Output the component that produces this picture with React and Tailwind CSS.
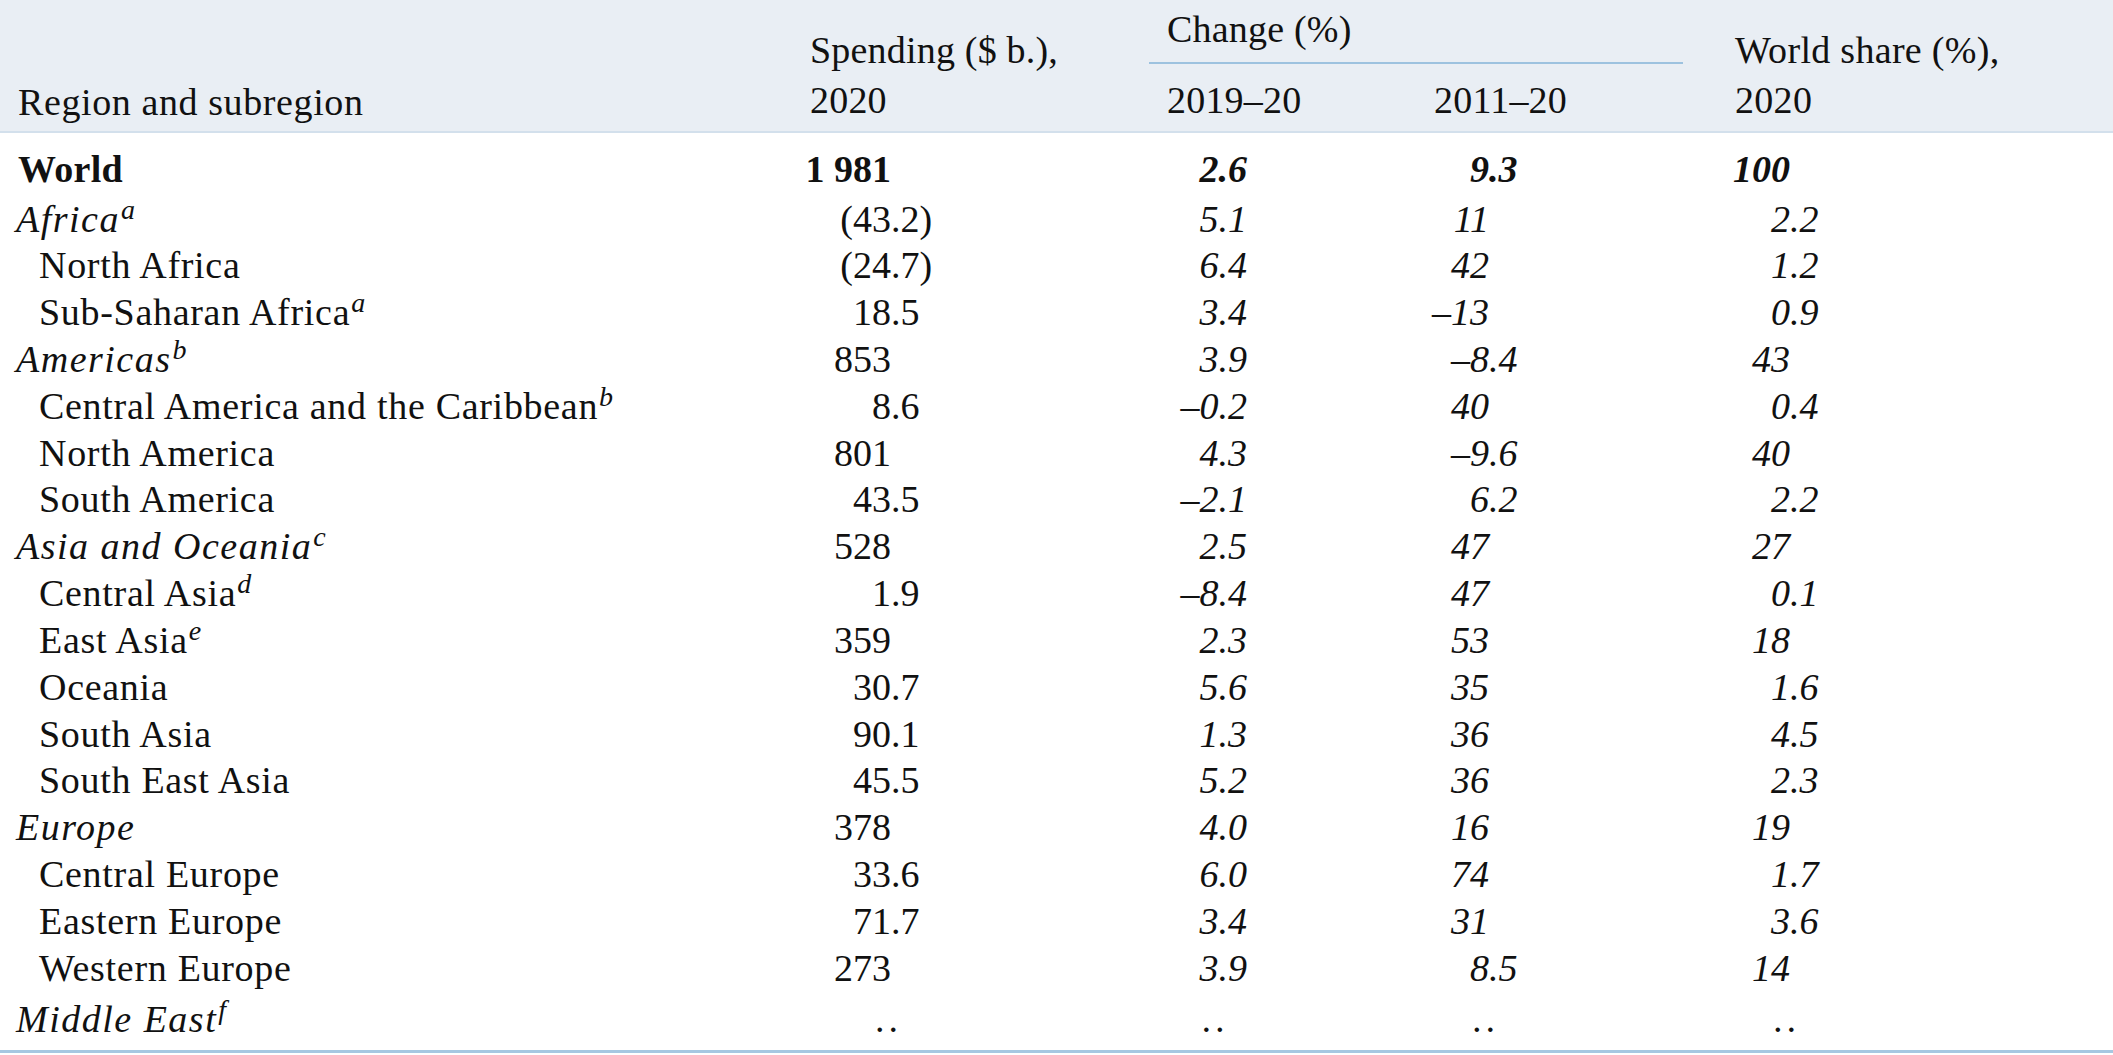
import React from 'react'

const COLS = 'grid grid-cols-[810px_339px_267px_301px_1fr]'

// [label, kind, sup, spending, change 2019-20, change 2011-20, world share]
// numbers are split into [integer part, fraction part] so they line up on the point
const rows = [
  ['World', 'world', '', ['1 981', ''], ['2', '.6'], ['9', '.3'], ['100', '']],
  ['Africa', 'region', 'a', ['(43', '.2)'], ['5', '.1'], ['11', ''], ['2', '.2']],
  ['North Africa', 'sub', '', ['(24', '.7)'], ['6', '.4'], ['42', ''], ['1', '.2']],
  ['Sub-Saharan Africa', 'sub', 'a', ['18', '.5'], ['3', '.4'], ['–13', ''], ['0', '.9']],
  ['Americas', 'region', 'b', ['853', ''], ['3', '.9'], ['–8', '.4'], ['43', '']],
  ['Central America and the Caribbean', 'sub', 'b', ['8', '.6'], ['–0', '.2'], ['40', ''], ['0', '.4']],
  ['North America', 'sub', '', ['801', ''], ['4', '.3'], ['–9', '.6'], ['40', '']],
  ['South America', 'sub', '', ['43', '.5'], ['–2', '.1'], ['6', '.2'], ['2', '.2']],
  ['Asia and Oceania', 'region', 'c', ['528', ''], ['2', '.5'], ['47', ''], ['27', '']],
  ['Central Asia', 'sub', 'd', ['1', '.9'], ['–8', '.4'], ['47', ''], ['0', '.1']],
  ['East Asia', 'sub', 'e', ['359', ''], ['2', '.3'], ['53', ''], ['18', '']],
  ['Oceania', 'sub', '', ['30', '.7'], ['5', '.6'], ['35', ''], ['1', '.6']],
  ['South Asia', 'sub', '', ['90', '.1'], ['1', '.3'], ['36', ''], ['4', '.5']],
  ['South East Asia', 'sub', '', ['45', '.5'], ['5', '.2'], ['36', ''], ['2', '.3']],
  ['Europe', 'region', '', ['378', ''], ['4', '.0'], ['16', ''], ['19', '']],
  ['Central Europe', 'sub', '', ['33', '.6'], ['6', '.0'], ['74', ''], ['1', '.7']],
  ['Eastern Europe', 'sub', '', ['71', '.7'], ['3', '.4'], ['31', ''], ['3', '.6']],
  ['Western Europe', 'sub', '', ['273', ''], ['3', '.9'], ['8', '.5'], ['14', '']],
  ['Middle East', 'region', 'f', ['..', ''], ['..', ''], ['..', ''], ['..', '']],
]

function Num({ value, width, className = '' }) {
  const [int, frac] = value
  const dots = int === '..'
  return (
    <div className={`flex whitespace-nowrap ${className}`}>
      <span className={`flex justify-end ${width}`}>
        {dots ? <span className="mr-[-11px] tracking-[4px]">..</span> : int}
      </span>
      <span>{frac}</span>
    </div>
  )
}

function Label({ text, kind, sup }) {
  if (kind === 'world') return <div className="pl-[18px] font-bold tracking-[0.3px]">{text}</div>
  const italic = kind === 'region'
  return (
    <div className={`whitespace-nowrap ${italic ? 'pl-[16px] italic tracking-[1.5px]' : 'pl-[39px] tracking-[0.7px]'}`}>
      {text}
      {sup && <span className="ml-[1px] align-[13px] text-[28px] leading-none italic tracking-normal">{sup}</span>}
    </div>
  )
}

export default function App() {
  return (
    <div className="w-[2113px] min-h-[1055px] bg-white text-[38px] text-[#111111] font-['Liberation_Serif','Times_New_Roman',serif]">
      <div className={`${COLS} h-[133px] bg-[#e9eef4] border-b-2 border-[#d3e0ec] leading-[50px]`}>
        <div className="pl-[18px] pt-[77px] tracking-[0.6px]">Region and subregion</div>
        <div className="pt-[25px] tracking-[0.2px]">
          <div>Spending ($ b.),</div>
          <div>2020</div>
        </div>
        <div className="col-span-2 pt-[4px] tracking-[0.2px]">
          <div className="pl-[18px]">Change (%)</div>
          <div className="mt-[8px] mr-[34px] h-[2px] bg-[#9dc2df]" />
          <div className="mt-[11px] grid grid-cols-[267px_301px]">
            <div className="pl-[18px]">2019–20</div>
            <div className="pl-[18px]">2011–20</div>
          </div>
        </div>
        <div className="pl-[18px] pt-[25px] tracking-[0.3px]">
          <div>World share (%),</div>
          <div>2020</div>
        </div>
      </div>

      <div className="pt-[12.5px] pb-[7px] border-b-[3px] border-[#a6c7e1]">
        {rows.map((r, i) => {
          const [label, kind, sup, sp, c1, c2, ws] = r
          const bold = kind === 'world' ? 'font-bold' : ''
          return (
            <div
              key={label}
              className={`${COLS} h-[46.83px] leading-[46.83px] ${i === 0 ? 'mb-[3.2px]' : ''} ${i === rows.length - 1 ? 'mt-[4.4px]' : ''}`}
            >
              <Label text={label} kind={kind} sup={sup} />
              <Num value={sp} width="w-[81px]" className={bold} />
              <Num value={c1} width="w-[51.5px]" className={`pl-[18px] italic ${bold}`} />
              <Num value={c2} width="w-[55px]" className={`pl-[18px] italic ${bold}`} />
              <Num value={ws} width="w-[55px]" className={`pl-[18px] italic ${bold}`} />
            </div>
          )
        })}
      </div>
    </div>
  )
}
